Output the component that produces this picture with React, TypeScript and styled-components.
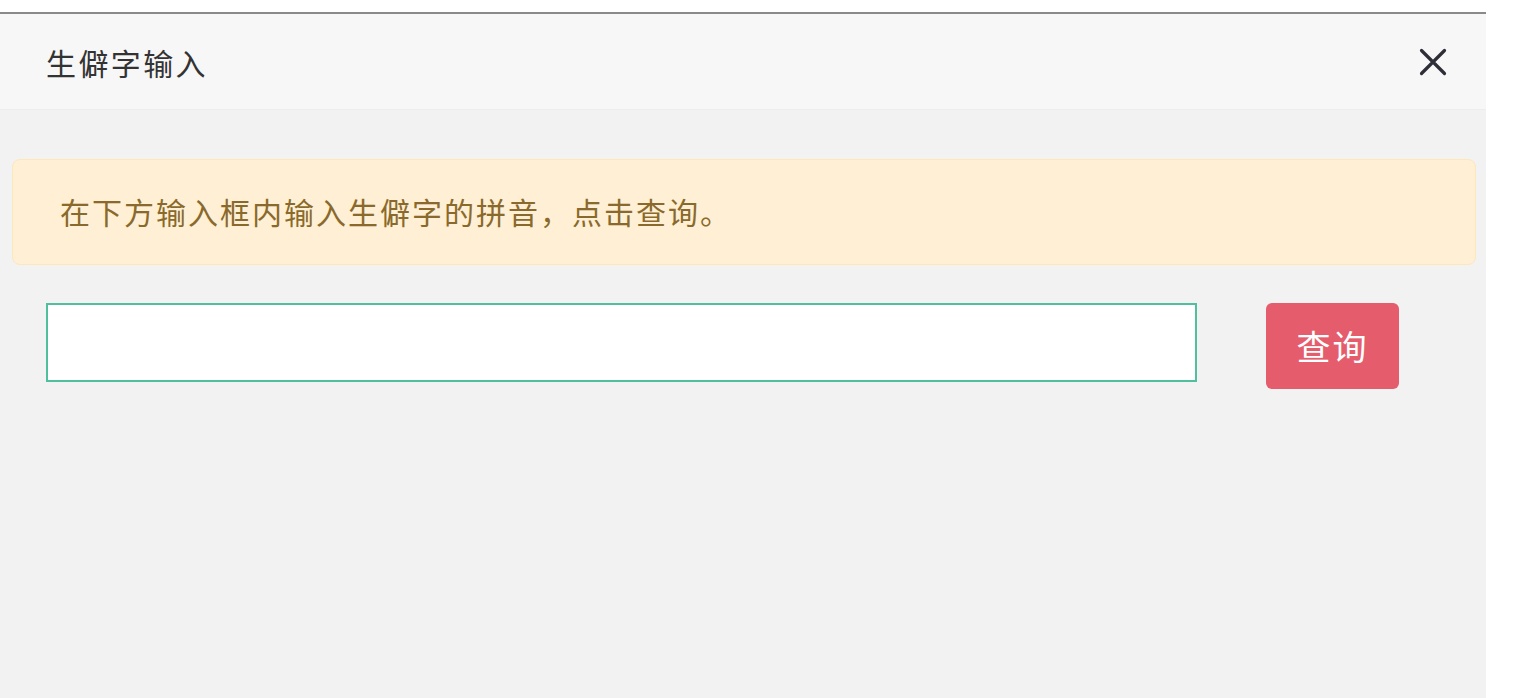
import React, { useState } from "react";
import styled, { createGlobalStyle } from "styled-components";

const GlobalStyle = createGlobalStyle`
  html, body {
    margin: 0;
    padding: 0;
    background: #fff;
    font-family: "Noto Sans CJK SC", "Noto Sans", sans-serif;
  }
`;

const Page = styled.div`
  padding-top: 12px;
  height: 698px;
  box-sizing: border-box;
  overflow: hidden;
`;

const Dialog = styled.div`
  width: 1486px;
  height: 686px;
  border-top: 2px solid #8a8a8a;
  background: #f2f2f2;
  box-sizing: border-box;
  display: flex;
  flex-direction: column;
`;

const Header = styled.div`
  height: 96px;
  flex-shrink: 0;
  display: flex;
  align-items: center;
  justify-content: space-between;
  padding: 0 38px 0 46px;
  background: #f7f7f7;
  border-bottom: 1px solid #ededed;
  box-sizing: border-box;
`;

const Title = styled.div`
  font-size: 30px;
  letter-spacing: 2.4px;
  color: #333;
`;

const CloseButton = styled.button`
  width: 30px;
  height: 30px;
  padding: 0;
  border: none;
  background: transparent;
  cursor: pointer;
  display: flex;
  align-items: center;
  justify-content: center;
`;

const Body = styled.div`
  padding: 49px 10px 0 12px;
  display: flex;
  flex-direction: column;
`;

const Alert = styled.div`
  height: 106px;
  box-sizing: border-box;
  display: flex;
  align-items: center;
  padding: 0 47px 2px;
  background: #fff0d5;
  border: 1px solid #fde7bb;
  border-radius: 8px;
  color: #8a6a2c;
  font-size: 30px;
  letter-spacing: 2px;
`;

const SearchRow = styled.div`
  margin-top: 38px;
  padding-left: 34px;
  display: flex;
  align-items: flex-start;
  gap: 69px;
`;

const TextInput = styled.input`
  width: 1151px;
  height: 79px;
  box-sizing: border-box;
  border: 2px solid #4fbf9e;
  background: #fff;
  outline: none;
  padding: 0 14px;
  font-size: 28px;
  font-family: inherit;
`;

const QueryButton = styled.button`
  width: 133px;
  height: 86px;
  border: none;
  border-radius: 6px;
  background: #e55c6c;
  color: #fff;
  font-size: 34px;
  letter-spacing: 2px;
  font-family: inherit;
  cursor: pointer;
  padding: 0 0 2px;
`;

export default function App() {
  const [pinyin, setPinyin] = useState("");

  return (
    <>
      <GlobalStyle />
      <Page>
        <Dialog>
          <Header>
            <Title>生僻字输入</Title>
            <CloseButton aria-label="关闭">
              <svg width="28" height="28" viewBox="0 0 28 28">
                <path d="M2.5 2.5 L25.5 25.5 M25.5 2.5 L2.5 25.5" stroke="#2e2e38" strokeWidth="3.2" strokeLinecap="round" />
              </svg>
            </CloseButton>
          </Header>
          <Body>
            <Alert>在下方输入框内输入生僻字的拼音，点击查询。</Alert>
            <SearchRow>
              <TextInput value={pinyin} onChange={(e) => setPinyin(e.target.value)} />
              <QueryButton>查询</QueryButton>
            </SearchRow>
          </Body>
        </Dialog>
      </Page>
    </>
  );
}
